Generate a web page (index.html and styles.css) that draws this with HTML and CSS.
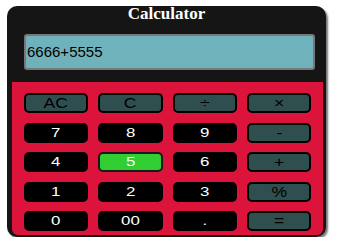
FILE: index.html
```html
<!DOCTYPE html>
<html>
<head>
    <title>Calculator</title>
    <link rel="stylesheet" href="styles.css">
</head>
<body>
    <div class="calculator">
        <h1 class="title">Calculator</h1>
        <div class="display">6666+5555</div>
        <div class="keypad">
            <button class="key op"><span class="label">AC</span></button>
            <button class="key op"><span class="label">C</span></button>
            <button class="key op"><span class="label">&divide;</span></button>
            <button class="key op"><span class="label">&times;</span></button>

            <button class="key num"><span class="label">7</span></button>
            <button class="key num"><span class="label">8</span></button>
            <button class="key num"><span class="label">9</span></button>
            <button class="key op"><span class="label">-</span></button>

            <button class="key num"><span class="label">4</span></button>
            <button class="key num active"><span class="label">5</span></button>
            <button class="key num"><span class="label">6</span></button>
            <button class="key op"><span class="label">+</span></button>

            <button class="key num"><span class="label">1</span></button>
            <button class="key num"><span class="label">2</span></button>
            <button class="key num"><span class="label">3</span></button>
            <button class="key op"><span class="label">%</span></button>

            <button class="key num"><span class="label">0</span></button>
            <button class="key num"><span class="label">00</span></button>
            <button class="key num"><span class="label">.</span></button>
            <button class="key op"><span class="label">=</span></button>
        </div>
    </div>
</body>
</html>
```

FILE: styles.css
```css
body {
    margin: 0;
    padding: 0;
    background-color: #fff;
    font-family: "Liberation Sans", Arial, sans-serif;
}

.calculator {
    width: 319px;
    margin: 6px 0 0 7px;
    padding: 0 0 2px 0;
    background-color: #151515;
    border-radius: 10px;
    box-shadow: 2px 2px 2px #777;
}

.title {
    margin: 0;
    height: 16px;
    line-height: 16px;
    font-family: "Liberation Serif", "Times New Roman", serif;
    font-size: 17px;
    font-weight: bold;
    color: #fff;
    text-align: center;
}

.display {
    box-sizing: border-box;
    width: 291px;
    height: 36px;
    margin: 12px 0 0 17px;
    padding: 0 1px;
    background-color: #70b2bb;
    border: 2px solid #777;
    border-radius: 3px;
    font-size: 15px;
    line-height: 32px;
    color: #000;
}

.keypad {
    box-sizing: border-box;
    width: 311px;
    margin: 12px 0 0 5px;
    padding: 11px 12px 4px 12px;
    background-color: #dc143c;
    border-radius: 0 0 6px 6px;
    display: grid;
    grid-template-columns: repeat(4, 1fr);
    grid-auto-rows: 20px;
    column-gap: 10px;
    row-gap: 9.5px;
}

.key {
    box-sizing: border-box;
    margin: 0;
    padding: 0;
    height: 20px;
    border: 2px solid #000;
    border-radius: 5px;
    font-family: "Liberation Sans", Arial, sans-serif;
    font-size: 14px;
    line-height: 16px;
}

/* glyphs in the keys are drawn a bit wider than normal */
.label {
    display: inline-block;
    transform: scaleX(1.25);
}

.op {
    background-color: #2f4f4f;
    color: #000;
}

.num {
    background-color: #000;
    color: #fff;
    font-size: 13.5px;
}

.num.active {
    background-color: #32cd32;
    border-color: #1a1a1a;
}
```
